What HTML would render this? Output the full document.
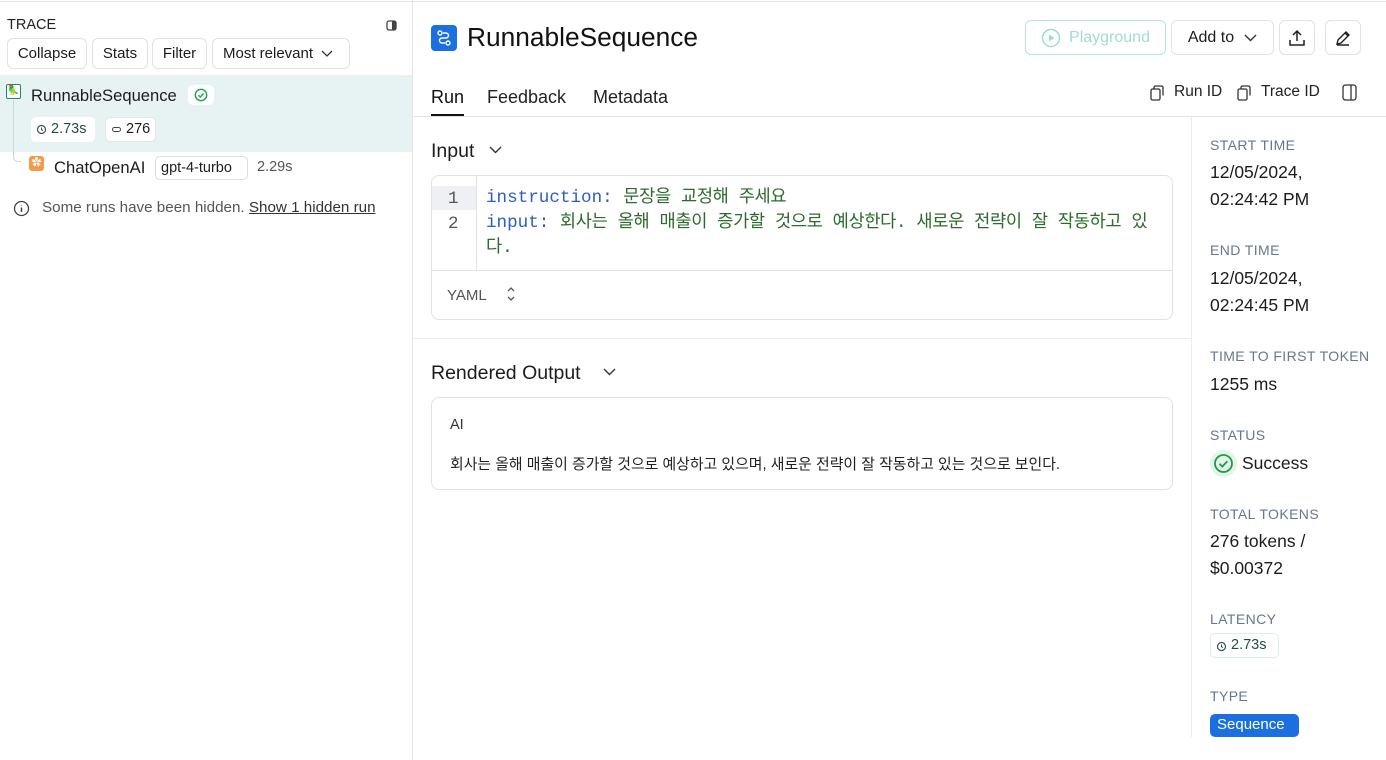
<!DOCTYPE html>
<html><head><meta charset="utf-8"><style>
*{box-sizing:border-box;margin:0;padding:0}
body{width:1386px;height:760px;overflow:hidden;background:#fff;font-family:"Liberation Sans","Noto Sans CJK KR",sans-serif;color:#1c1c1c;position:relative}
.a{position:absolute;white-space:nowrap}
.btn{position:absolute;border:1px solid #e2e2e2;border-radius:6px;font-size:15px;display:flex;align-items:center;justify-content:center;background:#fff}
.lbl{position:absolute;left:1210px;font-size:14px;color:#66778f;letter-spacing:.4px}
.val{position:absolute;left:1210px;font-size:17.5px;color:#1c1c1c;line-height:27px}
.mono{font-family:"Liberation Mono","Noto Sans CJK KR",monospace}
.k{letter-spacing:-0.35px}
</style></head><body>
<div class="a" style="left:0;top:1px;width:1386px;height:1px;background:#e5e5e5"></div>
<div class="a" style="left:412px;top:0;width:1px;height:760px;background:#e5e5e5"></div>
<div class="a" style="left:7px;top:17px;font-size:14.5px;color:#222">TRACE</div>
<svg class="a" style="left:386px;top:20px" width="11" height="11" viewBox="0 0 11 11"><rect x="1" y="1" width="9" height="9" rx="2" fill="none" stroke="#444" stroke-width="1.3"/><rect x="6" y="1" width="4" height="9" fill="#444"/></svg>
<div class="btn" style="left:7px;top:38px;width:80px;height:31px">Collapse</div>
<div class="btn" style="left:92px;top:38px;width:56px;height:31px">Stats</div>
<div class="btn" style="left:152px;top:38px;width:55px;height:31px">Filter</div>
<div class="btn" style="left:212px;top:38px;width:138px;height:31px;justify-content:flex-start;padding-left:10px">Most relevant<svg style="margin-left:8px" width="12" height="8" viewBox="0 0 12 8"><path d="M1 1l5 5 5-5" fill="none" stroke="#333" stroke-width="1.3"/></svg></div>
<div class="a" style="left:0;top:75px;width:412px;height:77px;background:#e6f3f2"></div>
<div class="a" style="left:13px;top:100px;width:1px;height:50px;background:#cfd6d6"></div>
<div class="a" style="left:13px;top:150px;width:8px;height:12px;border-left:1px solid #cfd6d6;border-bottom:1px solid #cfd6d6;border-bottom-left-radius:5px"></div>
<div class="a" style="left:6px;top:84px;width:15px;height:15px;border:1.5px solid #1a8a7e;border-radius:2px;background:#fff;font-size:10px;line-height:12px;text-align:center">🦜</div>
<div class="a" style="left:31px;top:86px;font-size:16.6px">RunnableSequence</div>
<div class="a" style="left:188px;top:85px;width:26px;height:20px;background:#fff;border-radius:5px"></div>
<svg class="a" style="left:194px;top:88px" width="14" height="14" viewBox="0 0 14 14"><circle cx="7" cy="7" r="5.7" fill="none" stroke="#22a050" stroke-width="1.4"/><path d="M4.5 7.2l1.8 1.8 3.3-3.5" fill="none" stroke="#22a050" stroke-width="1.4"/></svg>
<div class="a" style="left:31px;top:117px;width:64px;height:25px;background:#fff;border-radius:5px;font-size:14.5px;color:#1f4d45;padding:4px 0 0 20px">2.73s</div>
<svg class="a" style="left:36px;top:124px" width="11" height="11" viewBox="0 0 11 11"><circle cx="5.5" cy="5.5" r="4" fill="none" stroke="#355" stroke-width="1.2"/><path d="M5.5 3.5v2.2l1.4 1" fill="none" stroke="#355" stroke-width="1"/></svg>
<div class="a" style="left:105px;top:117px;width:51px;height:25px;background:#fff;border:1px solid #e0e6e6;border-radius:5px;font-size:14.5px;padding:3px 0 0 20px">276</div>
<div class="a" style="left:112px;top:127px;width:9px;height:5px;border:1.5px solid #444;border-radius:3px"></div>
<div class="a" style="left:29px;top:156px;width:15px;height:15px;background:#f49a49;border-radius:3px;color:#fff;font-size:10px;text-align:center;line-height:15px">✿</div>
<div class="a" style="left:54px;top:158px;font-size:16.6px">ChatOpenAI</div>
<div class="a" style="left:155px;top:156px;width:93px;height:24px;border:1px solid #ddd;border-radius:5px;font-size:14.5px;padding:3px 0 0 5px">gpt-4-turbo</div>
<div class="a" style="left:257px;top:159px;font-size:14.5px;color:#555">2.29s</div>
<svg class="a" style="left:13px;top:200px" width="17" height="17" viewBox="0 0 17 17"><circle cx="8.5" cy="8.5" r="7" fill="none" stroke="#444" stroke-width="1.3"/><path d="M8.5 7.5v4.5M8.5 5v.5" stroke="#444" stroke-width="1.5"/></svg>
<div class="a" style="left:42px;top:199px;font-size:15.2px;color:#555">Some runs have been hidden. <span style="color:#333;text-decoration:underline">Show 1 hidden run</span></div>
<div class="a" style="left:431px;top:25px;width:26px;height:26px;background:#1b6fe0;border-radius:4px"></div>
<svg class="a" style="left:431px;top:25px" width="26" height="26" viewBox="0 0 26 26"><circle cx="9" cy="8" r="2" fill="none" stroke="#fff" stroke-width="1.4"/><circle cx="17" cy="18" r="2" fill="none" stroke="#fff" stroke-width="1.4"/><path d="M12 8h3a2.5 2.5 0 010 5h-4a2.5 2.5 0 000 5h3" fill="none" stroke="#fff" stroke-width="1.4"/></svg>
<div class="a" style="left:467px;top:22px;font-size:26.3px;color:#111">RunnableSequence</div>
<div class="btn" style="left:1025px;top:20px;width:141px;height:35px;border-color:#b2e6df;color:#9fdcd3;font-size:16px"><svg width="20" height="20" viewBox="0 0 20 20" style="margin-right:8px"><circle cx="10" cy="10" r="8.5" fill="none" stroke="#9fdcd3" stroke-width="1.5"/><path d="M8 6.5v7l5.5-3.5z" fill="#9fdcd3"/></svg>Playground</div>
<div class="btn" style="left:1171px;top:20px;width:103px;height:35px;font-size:16px">Add to<svg style="margin-left:10px" width="13" height="8" viewBox="0 0 13 8"><path d="M1 1l5.5 5.5 5.5-5.5" fill="none" stroke="#333" stroke-width="1.4"/></svg></div>
<div class="btn" style="left:1279px;top:20px;width:36px;height:35px"><svg width="18" height="18" viewBox="0 0 18 18"><path d="M9 12V2M5 6l4-4 4 4M2 11v5h14v-5" fill="none" stroke="#222" stroke-width="1.5"/></svg></div>
<div class="btn" style="left:1325px;top:20px;width:36px;height:35px"><svg width="18" height="18" viewBox="0 0 18 18"><path d="M3 15l1-4 8-8 3 3-8 8zM11 4l3 3M3 16h12" fill="none" stroke="#222" stroke-width="1.4"/></svg></div>
<div class="a" style="left:431px;top:87px;font-size:18px;color:#111">Run</div>
<div class="a" style="left:431px;top:114px;width:33px;height:2px;background:#111"></div>
<div class="a" style="left:487px;top:87px;font-size:18px;color:#222">Feedback</div>
<div class="a" style="left:593px;top:87px;font-size:18px;color:#222">Metadata</div>
<svg class="a" style="left:1150px;top:85px" width="15" height="16" viewBox="0 0 15 16"><rect x="1" y="4" width="9" height="11" rx="1.5" fill="none" stroke="#333" stroke-width="1.3"/><path d="M4 4V2.5A1.5 1.5 0 015.5 1h6A1.5 1.5 0 0113 2.5v8" fill="none" stroke="#333" stroke-width="1.3"/></svg>
<div class="a" style="left:1174px;top:83px;font-size:15.5px;color:#222">Run ID</div>
<svg class="a" style="left:1237px;top:85px" width="15" height="16" viewBox="0 0 15 16"><rect x="1" y="4" width="9" height="11" rx="1.5" fill="none" stroke="#333" stroke-width="1.3"/><path d="M4 4V2.5A1.5 1.5 0 015.5 1h6A1.5 1.5 0 0113 2.5v8" fill="none" stroke="#333" stroke-width="1.3"/></svg>
<div class="a" style="left:1261px;top:83px;font-size:15.5px;color:#222">Trace ID</div>
<svg class="a" style="left:1342px;top:84px" width="15" height="17" viewBox="0 0 15 17"><rect x="1" y="1" width="13" height="15" rx="2.5" fill="none" stroke="#333" stroke-width="1.3"/><path d="M9 1v15" stroke="#333" stroke-width="1.3"/></svg>
<div class="a" style="left:413px;top:116px;width:973px;height:1px;background:#e5e5e5"></div>
<div class="a" style="left:1191px;top:117px;width:1px;height:620px;background:#ececec"></div>
<div class="a" style="left:431px;top:140px;font-size:19.5px">Input</div>
<svg class="a" style="left:489px;top:146px" width="13" height="8" viewBox="0 0 13 8"><path d="M1 1l5.5 5.5 5.5-5.5" fill="none" stroke="#333" stroke-width="1.4"/></svg>
<div class="a" style="left:431px;top:175px;width:742px;height:145px;border:1px solid #e2e2e2;border-radius:8px"></div>
<div class="a" style="left:432px;top:186px;width:44px;height:24px;background:#eef0f4"></div>
<div class="a" style="left:476px;top:176px;width:1px;height:94px;background:#e2e2e2"></div>
<div class="a mono" style="left:448px;top:187px;font-size:17.5px;color:#555;line-height:25px">1<br>2</div>
<div class="a mono" style="left:486px;top:186px;font-size:17.6px;line-height:25px;color:#2d6a2d"><span style="color:#2f5dbf">instruction:</span> <span class="k">문장을 교정해 주세요</span><br><span style="color:#2f5dbf">input:</span> <span class="k">회사는 올해 매출이 증가할 것으로 예상한다. 새로운 전략이 잘 작동하고 있</span><br>다.</div>
<div class="a" style="left:432px;top:270px;width:740px;height:1px;background:#e2e2e2"></div>
<div class="a" style="left:447px;top:287px;font-size:15px;color:#555">YAML</div>
<svg class="a" style="left:506px;top:286px" width="10" height="16" viewBox="0 0 10 16"><path d="M2 5l3-3 3 3M2 11l3 3 3-3" fill="none" stroke="#555" stroke-width="1.3"/></svg>
<div class="a" style="left:413px;top:338px;width:778px;height:1px;background:#ececec"></div>
<div class="a" style="left:431px;top:362px;font-size:19.5px">Rendered Output</div>
<svg class="a" style="left:603px;top:368px" width="13" height="8" viewBox="0 0 13 8"><path d="M1 1l5.5 5.5 5.5-5.5" fill="none" stroke="#333" stroke-width="1.4"/></svg>
<div class="a" style="left:431px;top:397px;width:742px;height:93px;border:1px solid #e2e2e2;border-radius:8px"></div>
<div class="a" style="left:450px;top:417px;font-size:14.5px;color:#333">AI</div>
<div class="a" style="left:450px;top:453px;font-size:14.9px;color:#222">회사는 올해 매출이 증가할 것으로 예상하고 있으며, 새로운 전략이 잘 작동하고 있는 것으로 보인다.</div>
<div class="lbl" style="top:137px">START TIME</div>
<div class="val" style="top:159px">12/05/2024,<br>02:24:42 PM</div>
<div class="lbl" style="top:242px">END TIME</div>
<div class="val" style="top:265px">12/05/2024,<br>02:24:45 PM</div>
<div class="lbl" style="top:348px">TIME TO FIRST TOKEN</div>
<div class="val" style="top:371px">1255 ms</div>
<div class="lbl" style="top:427px">STATUS</div>
<div class="a" style="left:1210px;top:450px;width:27px;height:27px;border-radius:50%;background:#e3f4e8"></div>
<svg class="a" style="left:1213px;top:453px" width="21" height="21" viewBox="0 0 21 21"><circle cx="10.5" cy="10.5" r="8.5" fill="none" stroke="#1f9a45" stroke-width="1.8"/><path d="M6.5 10.8l2.8 2.8 5-5.3" fill="none" stroke="#1f9a45" stroke-width="1.8"/></svg>
<div class="val" style="left:1242px;top:450px">Success</div>
<div class="lbl" style="top:506px">TOTAL TOKENS</div>
<div class="val" style="top:528px">276 tokens /<br>$0.00372</div>
<div class="lbl" style="top:611px">LATENCY</div>
<div class="a" style="left:1210px;top:633px;width:69px;height:25px;border:1px solid #dcefe6;border-radius:5px;font-size:14.5px;color:#1f4d45;padding:3px 0 0 20px">2.73s</div>
<svg class="a" style="left:1216px;top:641px" width="11" height="11" viewBox="0 0 11 11"><circle cx="5.5" cy="5.5" r="4" fill="none" stroke="#355" stroke-width="1.2"/><path d="M5.5 3.5v2.2l1.4 1" fill="none" stroke="#355" stroke-width="1"/></svg>
<div class="lbl" style="top:688px">TYPE</div>
<div class="a" style="left:1210px;top:714px;width:89px;height:23px;background:#1b6fe0;border-radius:5px;color:#fff;font-size:15px;padding:2px 0 0 7px">Sequence</div>
</body></html>
